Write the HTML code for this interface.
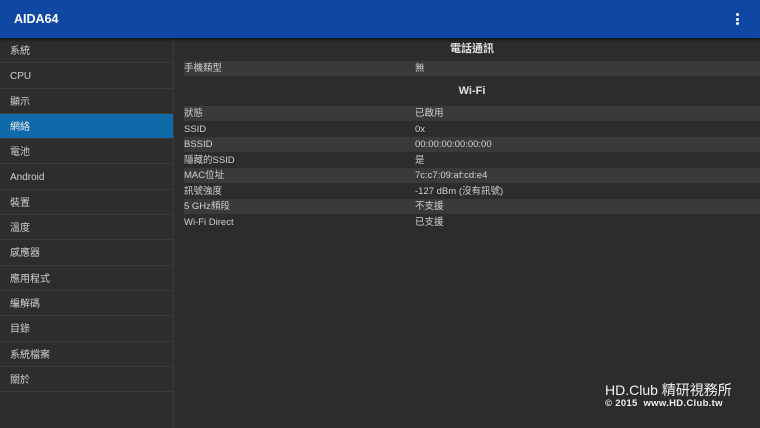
<!DOCTYPE html>
<html><head><meta charset="utf-8"><style>
*{margin:0;padding:0;box-sizing:border-box}
body{width:760px;height:428px;background:#2c2c2c;font-family:"Liberation Sans","Noto Sans CJK TC",sans-serif;color:#d0d0d0;overflow:hidden;position:relative;font-size:10px}
.hdr{position:absolute;left:0;top:0;width:760px;height:38px;background:#0f47a3;box-shadow:0 2px 3px rgba(0,0,0,.5);z-index:2}
.hdr .t{position:absolute;left:14px;top:12px;font-size:12.5px;font-weight:bold;color:#fff}
.dots{position:absolute;left:736px;top:13px;width:3px}
.dots i{display:block;width:3px;height:3px;background:#fff;border-radius:50%;margin-bottom:1.5px}
.side{position:absolute;left:0;top:38px;width:174px;height:390px;border-right:1px solid #3a3a3a;background:#2d2d2d}
.side div{height:25.3px;line-height:27px;padding-left:10px;border-bottom:1px solid #3a3a3a;color:#cfcfcf;font-size:10px}
.side .sel{background:#0e6aa8;color:#e8e8e8}
.r{position:absolute;left:184px;width:576px;height:15.3px;line-height:15px;font-size:9.5px}
.r.s{background:#3a3a3a}
.r span{position:absolute;left:231px}
.h{position:absolute;left:184px;width:576px;text-align:center;font-weight:bold;font-size:11px;color:#e0e0e0}
.wm{position:absolute;left:605px;top:383px;color:#f2f2f2;font-size:14px;line-height:14px}
.wm2{position:absolute;left:605px;top:398px;color:#eee;font-size:9.5px;font-weight:bold;letter-spacing:.3px}
</style></head><body>
<div class="hdr"><div class="t">AIDA64</div><div class="dots"><i></i><i></i><i></i></div></div>
<div class="side">
<div>系統</div><div>CPU</div><div>顯示</div><div class="sel">網絡</div><div>電池</div><div>Android</div><div>裝置</div><div>溫度</div><div>感應器</div><div>應用程式</div><div>編解碼</div><div>目錄</div><div>系統檔案</div><div>關於</div>
</div>
<div class="h" style="top:40px">電話通訊</div>
<div class="r s" style="top:61px">手機類型<span>無</span></div>
<div class="h" style="top:85px">Wi-Fi</div>
<div class="r s" style="top:106px">狀態<span>已啟用</span></div>
<div class="r" style="top:121.5px">SSID<span>0x</span></div>
<div class="r s" style="top:137px">BSSID<span>00:00:00:00:00:00</span></div>
<div class="r" style="top:152.5px">隱藏的SSID<span>是</span></div>
<div class="r s" style="top:168px">MAC位址<span>7c:c7:09:af:cd:e4</span></div>
<div class="r" style="top:183.5px">訊號強度<span>-127 dBm (沒有訊號)</span></div>
<div class="r s" style="top:199px">5 GHz頻段<span>不支援</span></div>
<div class="r" style="top:214.5px">Wi-Fi Direct<span>已支援</span></div>
<div class="wm">HD.Club 精研視務所</div>
<div class="wm2">© 2015 &nbsp;www.HD.Club.tw</div>
</body></html>
